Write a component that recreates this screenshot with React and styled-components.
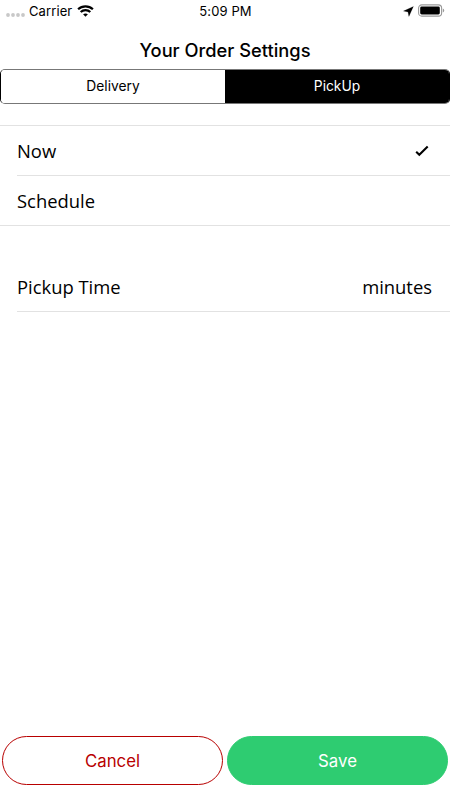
import React, {useState} from 'react'
import styled, {createGlobalStyle} from 'styled-components';

const App = () => {
    const [method, setMethod] = useState('PickUp');
    const [time, setTime] = useState('Now');

    return (
        <>
        <GlobalStyle/>
        <Screen>
            <StatusBar>
                <StatusLeft>
                    <Signal width="20" height="4" viewBox="0 0 20 4">
                        <circle cx="2" cy="2" r="1.9"/>
                        <circle cx="7" cy="2" r="1.9"/>
                        <circle cx="12" cy="2" r="1.9"/>
                        <circle cx="17" cy="2" r="1.9"/>
                    </Signal>
                    <StatusText>Carrier</StatusText>
                    <Wifi width="17" height="12" viewBox="0 0 17 12">
                        <path d="M1.1 4.2C5.2 .3 11.8 .3 15.9 4.2"/>
                        <path d="M3.7 7C6.4 4.4 10.6 4.4 13.3 7"/>
                        <path d="M6.1 9.3C7.4 8.1 9.6 8.1 10.9 9.3L8.5 11.8Z" fill="#000" stroke="none"/>
                    </Wifi>
                </StatusLeft>
                <StatusText>5:09 PM</StatusText>
                <StatusRight>
                    <svg width="11" height="11" viewBox="0 0 11 11">
                        <path d="M10.4.5L.5 5.1L5 5.9L5.9 10.4Z" stroke="#000" strokeWidth=".2"/>
                    </svg>
                    <Battery width="27" height="13" viewBox="0 0 27 13">
                        <rect x=".6" y=".9" width="23" height="11.2" rx="3.2" fill="none" stroke="#999" strokeWidth="1.1"/>
                        <rect x="2.2" y="2.6" width="19.6" height="7.8" rx="1.4"/>
                        <path d="M24.8 4.5V8.5Q26.2 7.8 26.2 6.5T24.8 4.5Z" fill="#999"/>
                    </Battery>
                </StatusRight>
            </StatusBar>
            <Title>Your Order Settings</Title>
            <Segments>
                {['Delivery', 'PickUp'].map((name) => (
                    <Segment key={name} $active={method === name} onClick={() => setMethod(name)}>{name}</Segment>
                ))}
            </Segments>
            <List>
                {['Now', 'Schedule'].map((name) => (
                    <Row key={name} onClick={() => setTime(name)}>
                        <Label>{name}</Label>
                        {time === name && (
                            <Check width="14" height="12" viewBox="0 0 14 12">
                                <path d="M1.2 6.8L4.3 9.8L12.7 1.6"/>
                            </Check>
                        )}
                    </Row>
                ))}
            </List>
            <PickupRow>
                <Label>Pickup Time</Label>
                <Label>minutes</Label>
            </PickupRow>
            <Footer>
                <Button>Cancel</Button>
                <Button $filled>Save</Button>
            </Footer>
        </Screen>
        </>
    )
}

const GlobalStyle = createGlobalStyle`
    body {
        margin: 0;
        background: #fff;
    }
    * {
        box-sizing: border-box;
    }
`;

const Screen = styled.div`
    width: 450px;
    height: 800px;
    display: flex;
    flex-direction: column;
    overflow: hidden;
    background: #fff;
    color: #000;
    font-family: Inter, sans-serif;
`;

const StatusBar = styled.div`
    height: 22px;
    padding: 0 5px 0 6px;
    display: grid;
    grid-template-columns: 1fr auto 1fr;
    align-items: center;
`;

const StatusLeft = styled.div`
    display: flex;
    align-items: center;
`;

const StatusRight = styled.div`
    display: flex;
    justify-content: flex-end;
    align-items: center;
    gap: 4px;
`;

const StatusText = styled.span`
    font-size: 13px;
    line-height: 22px;
    letter-spacing: 0.1px;
`;

const Signal = styled.svg`
    margin: 7px 3px 0 0;
    fill: #c8c8c8;
`;

const Wifi = styled.svg`
    margin: 0 0 1px 5px;
    fill: none;
    stroke: #000;
    stroke-width: 2.2;
`;

const Battery = styled.svg`
    margin-bottom: 2px;
`;

const Title = styled.h1`
    height: 47px;
    margin: 0;
    padding-top: 5px;
    font-size: 18.3px;
    font-weight: 550;
    line-height: 47px;
    text-align: center;
`;

const Segments = styled.div`
    height: 35px;
    display: flex;
    border: 1px solid #000;
    border-top-color: #777;
    border-bottom-color: #777;
    border-radius: 5px;
    overflow: hidden;
`;

const Segment = styled.button`
    flex: 1;
    border: 0;
    padding: 0 0 2px;
    font-family: inherit;
    font-size: 13.8px;
    font-weight: 370;
    cursor: pointer;
    background: ${({$active}) => $active ? '#000' : '#fff'};
    color: ${({$active}) => $active ? '#fff' : '#000'};
`;

const List = styled.div`
    margin-top: 21px;
    border-top: 1px solid #e2e2e2;
    border-bottom: 1px solid #e2e2e2;
`;

const Row = styled.div`
    height: 50px;
    margin-left: 17px;
    padding-right: 18px;
    display: flex;
    align-items: center;
    justify-content: space-between;
    border-bottom: 1px solid #e2e2e2;
    cursor: pointer;
    &:last-child{
        height: 49px;
        border-bottom: 0;
    }
`;

const PickupRow = styled(Row)`
    height: 50px;
    margin-top: 36px;
`;

const Label = styled.span`
    font-family: "Open Sans", sans-serif;
    font-size: 18.4px;
    font-weight: 400;
    line-height: 26px;
`;

const Check = styled.svg`
    margin-right: 3px;
    fill: none;
    stroke: #000;
    stroke-width: 2.1;
`;

const Footer = styled.div`
    margin-top: auto;
    padding: 0 2px 15px;
    display: flex;
    gap: 4px;
`;

const Button = styled.button`
    flex: 1;
    height: 49px;
    padding: 0;
    border: 1px solid ${({$filled}) => $filled ? '#2ecc71' : '#b80000'};
    border-radius: 25px;
    background: ${({$filled}) => $filled ? '#2ecc71' : '#fff'};
    color: ${({$filled}) => $filled ? '#fff' : '#b80000'};
    font-family: inherit;
    font-size: 16.8px;
    font-weight: 370;
    cursor: pointer;
`;

export default App
